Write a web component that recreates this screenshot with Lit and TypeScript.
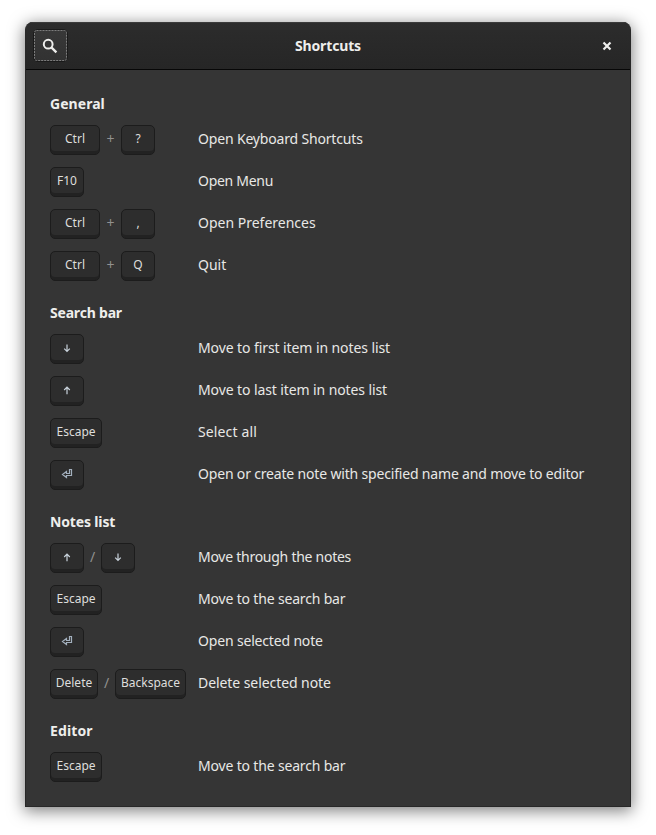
import { LitElement, html, css, svg } from "lit";
import { customElement, property } from "lit/decorators.js";

// `tracking` is the letter spacing of the text, in px.
type Shortcut = { keys: string[]; sep?: string; label: string; tracking: number };
type Section = { title: string; tracking: number; items: Shortcut[] };

const SECTIONS: Section[] = [
  {
    title: "General",
    tracking: 0.05,
    items: [
      { keys: ["Ctrl", "?"], sep: "+", label: "Open Keyboard Shortcuts", tracking: -0.17 },
      { keys: ["F10"], label: "Open Menu", tracking: -0.28 },
      { keys: ["Ctrl", ","], sep: "+", label: "Open Preferences", tracking: 0 },
      { keys: ["Ctrl", "Q"], sep: "+", label: "Quit", tracking: 0 },
    ],
  },
  {
    title: "Search bar",
    tracking: -0.2,
    items: [
      { keys: ["↓"], label: "Move to first item in notes list", tracking: -0.09 },
      { keys: ["↑"], label: "Move to last item in notes list", tracking: -0.1 },
      { keys: ["Escape"], label: "Select all", tracking: 0.13 },
      {
        keys: ["⏎"],
        label: "Open or create note with specified name and move to editor",
        tracking: -0.175,
      },
    ],
  },
  {
    title: "Notes list",
    tracking: -0.15,
    items: [
      { keys: ["↑", "↓"], sep: "/", label: "Move through the notes", tracking: -0.26 },
      { keys: ["Escape"], label: "Move to the search bar", tracking: -0.17 },
      { keys: ["⏎"], label: "Open selected note", tracking: -0.17 },
      { keys: ["Delete", "Backspace"], sep: "/", label: "Delete selected note", tracking: -0.07 },
    ],
  },
  {
    title: "Editor",
    tracking: 0.12,
    items: [{ keys: ["Escape"], label: "Move to the search bar", tracking: -0.17 }],
  },
];

// Outer widths of the keycaps that are wider than the 34px minimum.
const KEY_WIDTHS: Record<string, number> = { Ctrl: 50, Escape: 52, Delete: 48, Backspace: 71 };

const GLYPHS: Record<string, unknown> = {
  "↓": svg`<path d="M6 2.6v7M3.2 6.7L6 9.5l2.8-2.8"/>`,
  "↑": svg`<path d="M6 10.2v-7M3.2 6L6 3.2 8.8 6"/>`,
  "⏎": svg`<path class="thin" d="M8.5 1.5h2v6h-5v2l-4-3 4-3v2h3z"/>`,
};

@customElement("key-cap")
class KeyCap extends LitElement {
  @property() name = "";

  static styles = css`
    :host {
      display: block;
      flex: none;
    }
    .cap {
      box-sizing: border-box;
      min-width: 34px;
      height: 30px;
      padding-bottom: 3px;
      border: 1px solid #1c1c1c;
      border-radius: 5px;
      background: #2d2d2d;
      box-shadow: inset 0 -3px #222;
      display: flex;
      align-items: center;
      justify-content: center;
      font-size: 12px;
      line-height: 16px;
      color: #dededc;
      white-space: pre;
    }
    svg {
      display: block;
      fill: none;
      stroke: #c9d3dc;
      stroke-width: 1.2;
    }
    .thin {
      stroke: #a3b0be;
      stroke-width: 1.2;
    }
  `;

  render() {
    const glyph = GLYPHS[this.name];
    return html`<div class="cap" style="width:${KEY_WIDTHS[this.name] ?? 34}px">
      ${glyph ? html`<svg width="12" height="11" viewBox="0 0 12 11">${glyph}</svg>` : html`<span>${this.name}</span>`}
    </div>`;
  }
}

@customElement("app-root")
class AppRoot extends LitElement {
  static styles = css`
    :host {
      display: block;
      box-sizing: border-box;
      height: 835px;
      padding: 22px 25px 28px;
      overflow: hidden;
      background: #fff;
      font-family: "Noto Sans", "Open Sans", sans-serif;
      font-size: 14px;
      color: #eeeeec;
    }
    .window {
      box-sizing: border-box;
      height: 785px;
      border-radius: 8px 8px 0 0;
      background: #353535;
      box-shadow: 0 3px 16px 1px rgba(0, 0, 0, 0.5);
      border: 1px solid #282828;
      border-top: 0;
      overflow: hidden;
    }
    header {
      box-sizing: border-box;
      height: 48px;
      display: grid;
      grid-template-columns: 48px 1fr 48px;
      align-items: center;
      background: linear-gradient(#2c2c2c, #262626);
      border-bottom: 1px solid #070707;
      box-shadow: inset 0 1px #3a3a3a;
    }
    .search {
      box-sizing: border-box;
      width: 35px;
      height: 33px;
      margin: 0 0 0 7px;
      border: 1px solid #1a1a1a;
      border-radius: 5px;
      background: linear-gradient(#383838, #323232);
      padding: 0;
      display: grid;
      place-items: center;
    }
    svg {
      display: block;
    }
    .title {
      text-align: center;
      font-weight: 700;
      line-height: 20px;
      letter-spacing: -0.15px;
    }
    .close {
      justify-self: center;
      margin: 1px 0 0 2px;
    }
    main {
      display: flex;
      flex-direction: column;
      gap: 22px;
      padding: 24px 24px 0;
    }
    h2 {
      margin: 0 0 11px;
      font-size: 14px;
      font-weight: 700;
      line-height: 20px;
    }
    .rows {
      display: flex;
      flex-direction: column;
      gap: 12px;
    }
    .row {
      display: grid;
      grid-template-columns: 148px 1fr;
      height: 30px;
    }
    .keys {
      display: flex;
    }
    .sep {
      width: 17px;
      text-align: center;
      line-height: 28px;
      color: #91918f;
    }
    .sep.plus {
      width: 21px;
    }
    .label {
      line-height: 28px;
      white-space: nowrap;
      color: #e8e8e6;
    }
  `;

  render() {
    return html`<div class="window">
      <header>
        <button class="search" aria-label="Search">
          <svg width="33" height="31" viewBox="0 0 33 31" fill="none">
            <rect x="0.5" y="0.5" width="32" height="30" rx="2" stroke="#7c7c7c" stroke-dasharray="2 1" />
            <circle cx="14.2" cy="14.2" r="4.4" stroke="#eeeeec" stroke-width="2" />
            <path d="M17.4 17.4l5 5" stroke="#eeeeec" stroke-width="2.3" />
          </svg>
        </button>
        <div class="title">Shortcuts</div>
        <svg class="close" width="10" height="10" viewBox="0 0 10 10">
          <path d="M1.5 1.5l7 7M8.5 1.5l-7 7" stroke="#eeeeec" stroke-width="2.2" />
        </svg>
      </header>
      <main>
        ${SECTIONS.map(
          (s) => html`<section>
            <h2><span style="letter-spacing:${s.tracking}px">${s.title}</span></h2>
            <div class="rows">
              ${s.items.map(
                (i) => html`<div class="row">
                  <div class="keys">
                    ${i.keys.map(
                      (k, n) => html`${n ? html`<span class="sep ${i.sep === "+" ? "plus" : ""}">${i.sep}</span>` : ""}<key-cap name=${k}></key-cap>`
                    )}
                  </div>
                  <div class="label"><span style="letter-spacing:${i.tracking}px">${i.label}</span></div>
                </div>`
              )}
            </div>
          </section>`
        )}
      </main>
    </div>`;
  }
}
